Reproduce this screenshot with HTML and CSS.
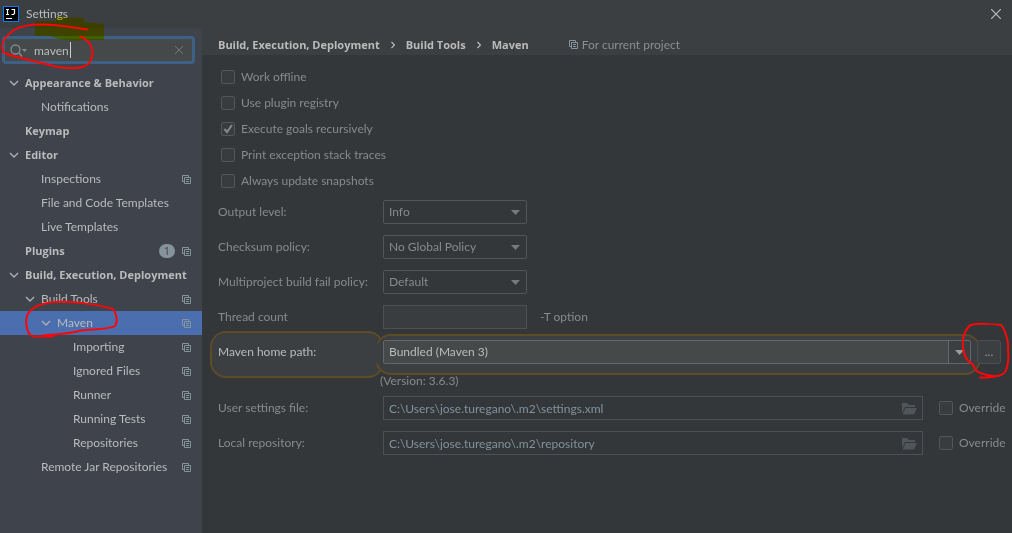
FILE: index.html
```html
<!DOCTYPE html>
<html lang="en">
<head>
<meta charset="utf-8">
<title>Settings</title>
<link rel="stylesheet" href="styles.css">
</head>
<body>
<svg class="defs" aria-hidden="true">
  <symbol id="chevron" viewBox="0 0 10 8"><path d="M1 2l4 4 4-4" fill="none" stroke="currentColor" stroke-width="1.4"/></symbol>
  <symbol id="copy" viewBox="0 0 9 9"><path d="M2 6.500H.5v-6h6V2M2.500 2.500h6v6h-6zM4 4.500h3M4 6.500h3" fill="none" stroke="currentColor"/></symbol>
  <symbol id="folder" viewBox="0 0 15 12"><path d="M0 10V0h5l2 2h6v2H3z M3.500 5H15l-3 6.500H.5z" fill="currentColor"/></symbol>
  <symbol id="down" viewBox="0 0 9 5"><path d="M0 0h9L4.500 5z" fill="currentColor"/></symbol>
</svg>

<div class="window">
  <header class="titlebar">
    <svg class="logo" viewBox="0 0 16 16" aria-hidden="true"><rect x=".5" y=".5" width="15" height="15" fill="#000" stroke="#087cfa"/><path d="M3 3.500h3M4.500 3.500v5M3 8.500h3M8.500 3.500h3v4l-1 1h-2M3 12.500h6" fill="none" stroke="#fff" stroke-width="1.200"/></svg>
    <h1 class="title">Settings</h1>
    <button class="close" aria-label="Close"><svg viewBox="0 0 10 10"><path d="M0 0l10 10M10 0L0 10" stroke="currentColor" stroke-width="1.200"/></svg></button>
  </header>

  <div class="body">
    <aside class="sidebar">
      <div class="search">
        <svg class="search-icon" viewBox="0 0 17 13" aria-hidden="true"><circle cx="5.500" cy="5.500" r="4.500" fill="none" stroke="currentColor" stroke-width="1.300"/><path d="M9 9l3 3.500" stroke="currentColor" stroke-width="1.500"/><path d="M12 5h5l-2.500 3z" fill="currentColor"/></svg>
        <input class="search-input" type="text" value="maven" aria-label="Search settings">
        <span class="caret"></span>
        <button class="clear" aria-label="Clear"><svg viewBox="0 0 8 8"><path d="M0 0l8 8M8 0L0 8" stroke="currentColor"/></svg></button>
      </div>
      <nav class="tree">
        <a class="node bold" href="#"><svg class="chev"><use href="#chevron"/></svg><span>Appearance &amp; Behavior</span></a>
        <a class="node level1" href="#"><span>Notifications</span></a>
        <a class="node bold" href="#"><span class="chev"></span><span>Keymap</span></a>
        <a class="node bold" href="#"><svg class="chev"><use href="#chevron"/></svg><span>Editor</span></a>
        <a class="node level1" href="#"><span>Inspections</span><svg class="copy"><use href="#copy"/></svg></a>
        <a class="node level1" href="#"><span>File and Code Templates</span></a>
        <a class="node level1" href="#"><span>Live Templates</span></a>
        <a class="node bold" href="#"><span class="chev"></span><span>Plugins</span><span class="badge">1</span><svg class="copy"><use href="#copy"/></svg></a>
        <a class="node bold" href="#"><svg class="chev"><use href="#chevron"/></svg><span>Build, Execution, Deployment</span></a>
        <a class="node open1" href="#"><svg class="chev"><use href="#chevron"/></svg><span>Build Tools</span><svg class="copy"><use href="#copy"/></svg></a>
        <a class="node open2 selected" href="#"><svg class="chev"><use href="#chevron"/></svg><span>Maven</span><svg class="copy"><use href="#copy"/></svg></a>
        <a class="node level3" href="#"><span>Importing</span><svg class="copy"><use href="#copy"/></svg></a>
        <a class="node level3" href="#"><span>Ignored Files</span><svg class="copy"><use href="#copy"/></svg></a>
        <a class="node level3" href="#"><span>Runner</span><svg class="copy"><use href="#copy"/></svg></a>
        <a class="node level3" href="#"><span>Running Tests</span><svg class="copy"><use href="#copy"/></svg></a>
        <a class="node level3" href="#"><span>Repositories</span><svg class="copy"><use href="#copy"/></svg></a>
        <a class="node level1" href="#"><span>Remote Jar Repositories</span><svg class="copy"><use href="#copy"/></svg></a>
      </nav>
    </aside>

    <main class="main">
      <div class="crumbs">
        <span>Build, Execution, Deployment</span>
        <svg class="sep" viewBox="0 0 4 8"><path d="M.5 1l3 3-3 3" fill="none" stroke="currentColor" stroke-width="1.200"/></svg>
        <span>Build Tools</span>
        <svg class="sep" viewBox="0 0 4 8"><path d="M.5 1l3 3-3 3" fill="none" stroke="currentColor" stroke-width="1.200"/></svg>
        <span>Maven</span>
        <span class="scope"><svg class="copy"><use href="#copy"/></svg>For current project</span>
      </div>

      <form class="form">
        <div class="checks">
          <label class="check"><input type="checkbox">Work offline</label>
          <label class="check"><input type="checkbox">Use plugin registry</label>
          <label class="check"><input type="checkbox" checked>Execute goals recursively</label>
          <label class="check"><input type="checkbox">Print exception stack traces</label>
          <label class="check"><input type="checkbox">Always update snapshots</label>
        </div>

        <div class="rows">
          <div class="row"><label class="name" for="level">Output level:</label>
            <div class="select"><select id="level"><option>Info</option></select><svg class="down"><use href="#down"/></svg></div></div>
          <div class="row"><label class="name" for="checksum">Checksum policy:</label>
            <div class="select"><select id="checksum"><option>No Global Policy</option></select><svg class="down"><use href="#down"/></svg></div></div>
          <div class="row"><label class="name" for="fail">Multiproject build fail policy:</label>
            <div class="select"><select id="fail"><option>Default</option></select><svg class="down"><use href="#down"/></svg></div></div>
          <div class="row"><label class="name" for="threads">Thread count</label>
            <input class="text threads" id="threads" type="text"><span class="hint">-T option</span></div>
          <div class="row home">
            <label class="name spot-label" for="home">Maven home path:</label>
            <div class="combo"><input id="home" type="text" value="Bundled (Maven 3)"><button type="button" class="drop" aria-label="Show choices"><svg class="down"><use href="#down"/></svg></button></div>
            <button type="button" class="browse">...</button>
          </div>
        </div>
        <p class="version">(Version: 3.6.3)</p>
        <div class="rows">
          <div class="row"><label class="name" for="user">User settings file:</label>
            <div class="path"><input id="user" class="text" type="text" value="C:\Users\jose.turegano\.m2\settings.xml"><svg class="folder"><use href="#folder"/></svg></div>
            <label class="check override"><input type="checkbox">Override</label></div>
          <div class="row"><label class="name" for="repo">Local repository:</label>
            <div class="path"><input id="repo" class="text" type="text" value="C:\Users\jose.turegano\.m2\repository"><svg class="folder"><use href="#folder"/></svg></div>
            <label class="check override"><input type="checkbox">Override</label></div>
        </div>
      </form>
    </main>
  </div>

  <svg class="ink ink-left marker" viewBox="0 0 210 350" aria-hidden="true">
    <path d="M35 21h21v-4l28 1v4l20 2v16H81l-1 1-12-1-9-1-9-3H35z"/>
  </svg>
  <svg class="ink ink-left" viewBox="0 0 210 350" aria-hidden="true">
    <path class="pen" d="M87 29.500C66 26 30 20 14 30C3 38-1 45 4 53C20 59 40 62 55 66.500C70 69 86 69 90 62C96 50 90 40 80 36.500"/>
    <path class="pen" d="M53 336.500H34C27 336 25 323 27 316C31 306 42 303 55 302C75 301 99 305 113 309C117 314 118 322 115 326C108 330 91 329 79 331C68 334 56 334 43 335.500"/>
  </svg>
  <svg class="ink ink-right" viewBox="0 0 50 60" aria-hidden="true">
    <path class="pen" d="M18 57.500C25 58 32 57 38 55.500C31 57 23 55 16 52C12 50 13 45 9 43C4 40 0 32 .8 21C1 15 5 7 9 5C16 3 32 4 39 5C43 9 47 22 46 30C47 38 46 51 41 54C36 57 30 56 26 57"/>
  </svg>
</div>
</body>
</html>
```
FILE: styles.css
```css
* { box-sizing: border-box; }
body {
  margin: 0;
  background: #33373a;
  color: #bbb;
  font: 12px/16px Lato, "Open Sans", sans-serif;
}
input, select, button { font: inherit; color: inherit; margin: 0; }
button { padding: 0; border: 0; background: none; }
.defs { position: absolute; width: 0; height: 0; }
.window { position: relative; min-height: 100vh; display: flex; flex-direction: column; }

.titlebar { display: flex; align-items: center; height: 28px; padding: 0 11px 0 3px; background: #3c3f41; }
.logo { width: 16px; height: 16px; }
.title { flex: 1; margin: 0 0 0 7px; font-size: 12px; font-weight: 400; }
.close { display: flex; }
.close svg { width: 10px; height: 10px; }

.body { flex: 1; display: flex; }
.sidebar { width: 202px; flex: none; background: #3e434c; }
.search {
  position: relative; display: flex; align-items: center;
  height: 28px; margin: 8px 7px 7px 2px; padding: 0 9px 0 5px;
  border: 3px solid #3d6185; border-radius: 4px; background: #45494a;
}
.search-icon { width: 17px; height: 13px; color: #7f8b91; }
.search-input { flex: 1; min-width: 0; height: 20px; padding: 0; margin-left: 7px; border: 0; outline: 0; background: none; }
.caret { position: absolute; left: 65px; top: 3px; width: 1px; height: 16px; background: #ccc; }
.clear { display: flex; color: #6e7679; }
.clear svg { width: 8px; height: 8px; }

.node { display: flex; align-items: center; height: 24px; padding: 0 11px 0 9px; color: inherit; text-decoration: none; white-space: nowrap; }
.bold { font: 700 11px/16px "Open Sans", sans-serif; }
.level1 { padding-left: 41px; }
.level3 { padding-left: 73px; }
.open1 { padding-left: 25px; }
.open2 { padding-left: 41px; }
.selected { background: #4b6eaf; }
.chev { flex: none; width: 10px; height: 8px; margin-right: 6px; color: #adb0b3; }
.copy { flex: none; width: 9px; height: 9px; color: #87939a; }
.node .copy { margin-left: auto; }
.node .badge + .copy { margin-left: 7px; }
.badge { margin-left: auto; width: 16px; height: 14px; border-radius: 7px; background: #87939a; color: #3e434c; font-weight: 400; line-height: 14px; text-align: center; }

.main { flex: 1; min-width: 0; }
.crumbs { display: flex; align-items: center; height: 27px; padding: 6px 16px 0; background: #3c3f41; font: 700 11px/16px "Open Sans", sans-serif; white-space: nowrap; }
.sep { width: 4px; height: 8px; margin: 0 11px; }
.scope { display: flex; align-items: center; gap: 4px; margin-left: 40px; font: 400 12px/16px Lato, sans-serif; color: #8a8d8f; }

.form { padding: 14px 8px 16px 16px; color: #888a8b; }
.checks { display: grid; gap: 10px; padding-left: 3px; margin-bottom: 11px; }
.check { display: flex; align-items: center; gap: 6px; width: max-content; }
.check input { flex: none; appearance: none; width: 14px; height: 14px; border: 1px solid #525658; border-radius: 2px; background: #383c3f; }
.check input:checked { background: #383c3f url("data:image/svg+xml,%3Csvg xmlns='http://www.w3.org/2000/svg' viewBox='0 0 12 12'%3E%3Cpath d='M2.500 6l2.500 3 5-7' fill='none' stroke='%23888' stroke-width='2'/%3E%3C/svg%3E"); }
.rows { display: grid; gap: 11px; }
.row { display: flex; align-items: center; height: 24px; }
.name { flex: none; width: 165px; white-space: nowrap; }
.select { position: relative; width: 144px; }
.select select { display: block; appearance: none; width: 100%; height: 24px; padding: 0 5px; border: 1px solid #525658; border-radius: 2px; background: #33373a; }
.select .down { position: absolute; right: 7px; top: 10px; }
.down { width: 9px; height: 5px; color: #777a7c; }
.text { height: 24px; padding: 0 5px; border: 1px solid #4d5153; background: #33373a; }
.threads { width: 144px; background: #393d3f; }
.hint { margin-left: 13px; }

.home { position: relative; z-index: 0; padding-right: 3px; color: #bbb; }
.home::before, .home::after { content: ""; position: absolute; z-index: -2; border: 2px solid #5e4c27; border-radius: 16px; background: #3c3f41; }
.home::before { left: -8px; top: -9px; width: 170px; height: 43px; }
.home::after { left: 157px; right: 23px; top: -6px; height: 37px; }
.spot-label::before { content: ""; position: absolute; z-index: -1; left: -6px; top: -7px; width: 166px; height: 39px; border-radius: 14px; background: #3c3f41; }
.combo::before { content: ""; position: absolute; z-index: -1; left: 159px; right: 25px; top: -4px; height: 33px; border-radius: 14px; background: #3c3f41; }
.combo { display: flex; flex: 1; height: 24px; border: 1px solid #646769; border-radius: 2px; }
.combo input { flex: 1; min-width: 0; padding: 0 5px; border: 0; background: #45494a; }
.drop { display: flex; align-items: center; justify-content: center; width: 22px; border-left: 1px solid #646769; }
.drop .down { color: #9a9da0; }
.browse { width: 24px; height: 24px; margin-left: 6px; border: 1px solid #4b4f51; border-radius: 3px; background: #3b3f42; color: #999; }
.version { margin: 9px 0 7px 162px; }
.path { position: relative; flex: 1; min-width: 0; }
.path .text { display: block; width: 100%; color: #82929b; }
.folder { position: absolute; right: 6px; top: 7px; width: 15px; height: 12px; color: #505559; }
.override { flex: none; width: 65px; margin-left: 16px; }

.ink { position: absolute; pointer-events: none; }
.ink-left { left: 0; top: 0; width: 210px; height: 350px; }
.ink-right { right: 0; top: 320px; width: 50px; height: 60px; }
.pen { fill: none; stroke: #f80808; stroke-width: 2; stroke-linecap: round; }
.marker { fill: #ff0; mix-blend-mode: multiply; }
```
